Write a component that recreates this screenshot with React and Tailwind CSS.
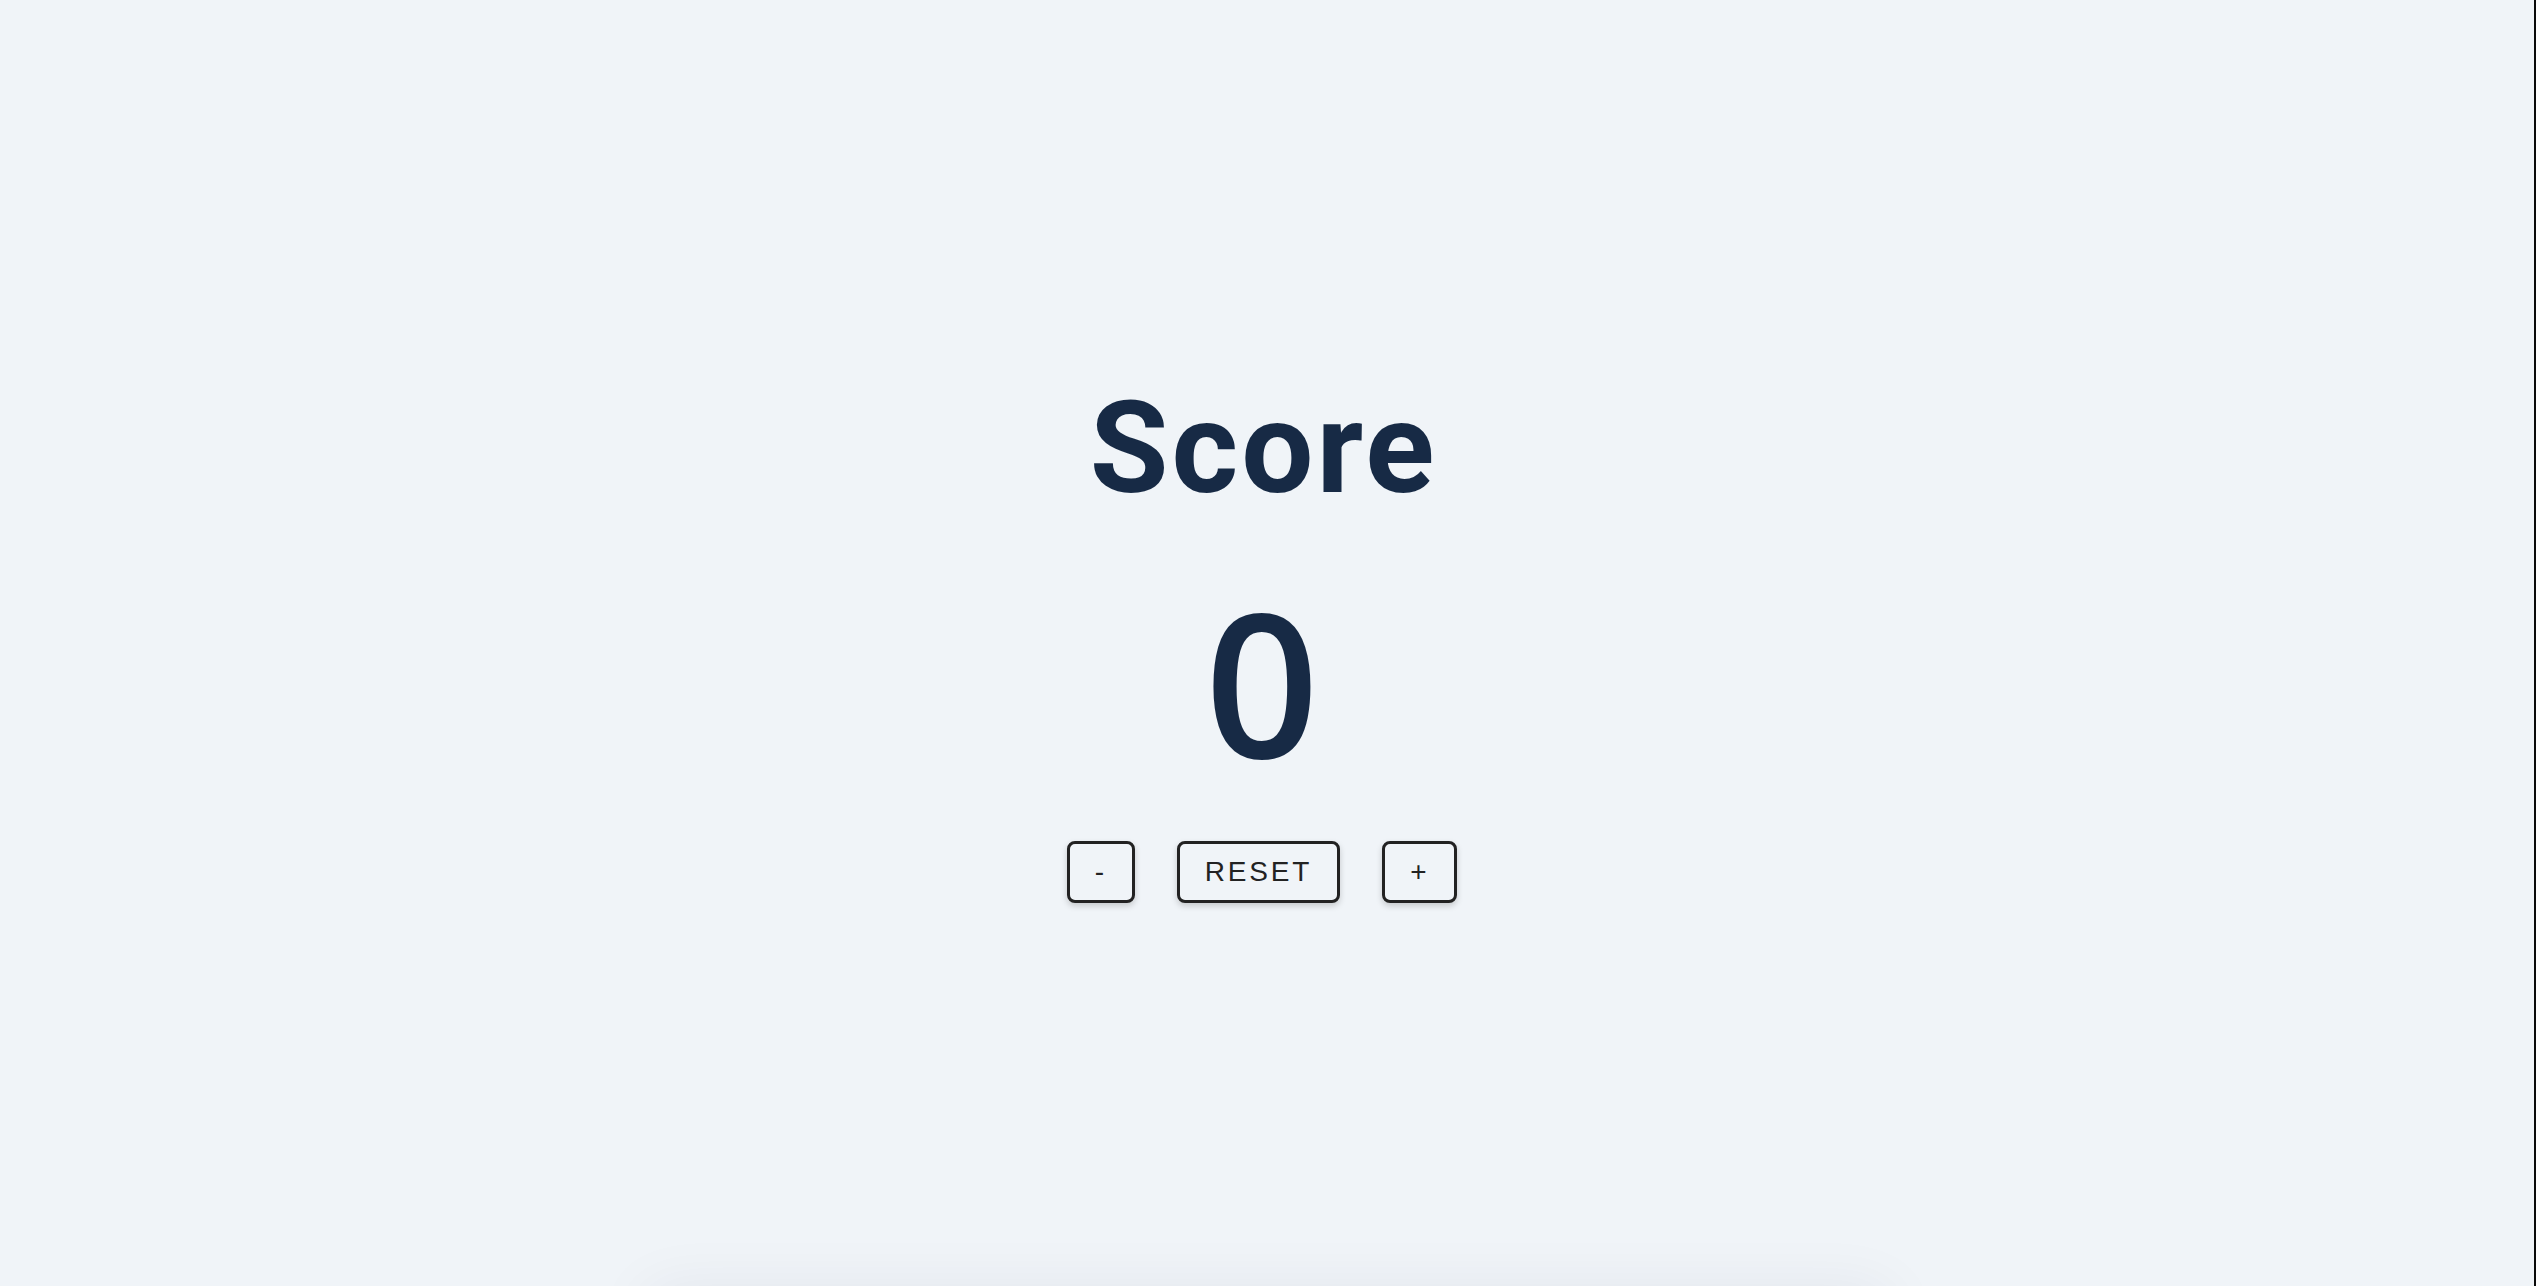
import React, { useState } from "react";

export default function App() {
  const [score, setScore] = useState(0);
  const btn =
    "border-[3px] border-[#222222] rounded-[8px] bg-[#f0f4f8] text-[#222222] text-[28px] leading-[32px] tracking-[0.1em] py-[12px] px-[25px] shadow-[0_3px_6px_rgba(0,0,0,0.18)] font-['Liberation_Sans',Arial,sans-serif]";
  return (
    <div className="relative min-h-screen w-full overflow-hidden bg-[#f0f4f8]">
      <div className="pointer-events-none absolute bottom-[-60px] left-[640px] right-[640px] h-[60px] rounded-[30px] shadow-[0_0_60px_rgba(30,40,60,0.06)]" />
      <div className="absolute right-0 top-0 h-full w-[2px] bg-[#0a0a0a]" />
      <div className="flex min-h-screen flex-col items-center justify-center pr-[12px] text-[#172a45]">
        <h1 className="m-0 mb-[69px] pl-[3px] font-['Roboto',sans-serif] text-[128px] font-bold leading-none tracking-[3px]">
          Score
        </h1>
        <div className="mb-[60px] font-['Open_Sans',sans-serif] text-[200px] font-semibold leading-none">
          {score}
        </div>
        <div className="flex items-center gap-[42px]">
          <button className={btn} onClick={() => setScore(score - 1)}>-</button>
          <button className={btn} onClick={() => setScore(0)}>RESET</button>
          <button className={btn} onClick={() => setScore(score + 1)}>+</button>
        </div>
      </div>
    </div>
  );
}
